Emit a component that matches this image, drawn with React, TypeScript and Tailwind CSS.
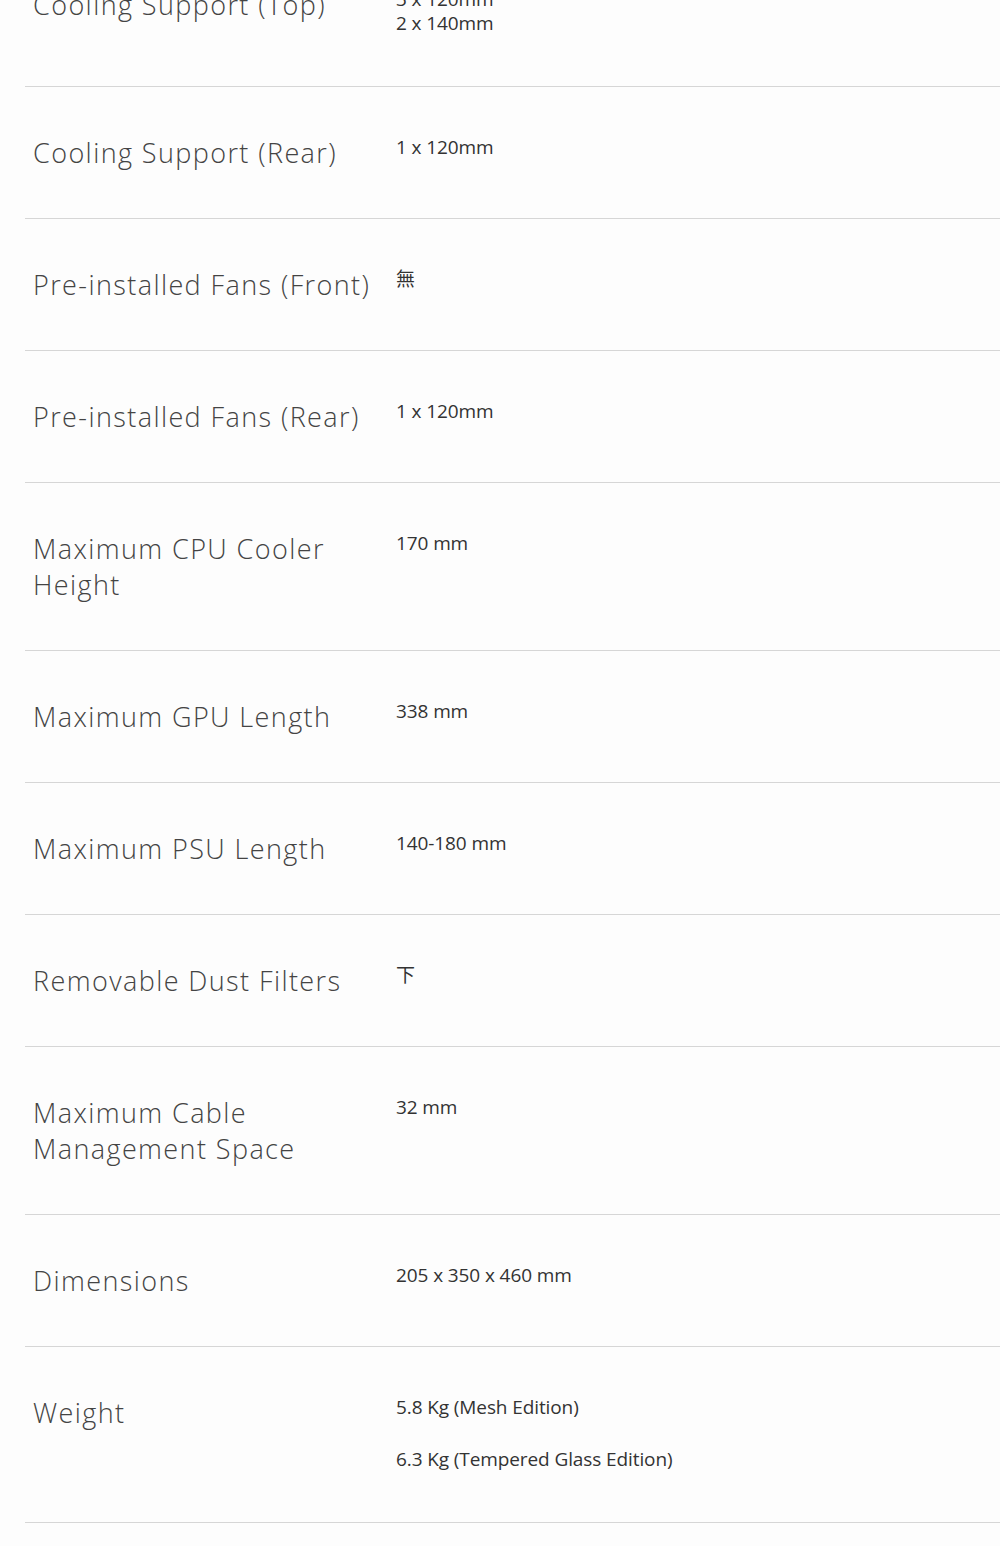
const specs: { label: string; values: string[]; multi?: boolean }[] = [
  { label: "Cooling Support (Top)", values: ["3 x 120mm", "2 x 140mm"], multi: true },
  { label: "Cooling Support (Rear)", values: ["1 x 120mm"] },
  { label: "Pre-installed Fans (Front)", values: ["無"] },
  { label: "Pre-installed Fans (Rear)", values: ["1 x 120mm"] },
  { label: "Maximum CPU Cooler Height", values: ["170 mm"] },
  { label: "Maximum GPU Length", values: ["338 mm"] },
  { label: "Maximum PSU Length", values: ["140-180 mm"] },
  { label: "Removable Dust Filters", values: ["下"] },
  { label: "Maximum Cable Management Space", values: ["32 mm"] },
  { label: "Dimensions", values: ["205 x 350 x 460 mm"] },
  { label: "Weight", values: ["5.8 Kg (Mesh Edition)", "6.3 Kg (Tempered Glass Edition)"] },
];

export default function App() {
  return (
    <div className="w-[1000px] min-h-[1546px] bg-[#fdfdfd] overflow-hidden">
      <div className="ml-[25px] -mt-[61px]">
        {specs.map((spec, i) => (
          <div
            key={i}
            className={`flex border-b border-[#d6d6d6] pt-12 ${i === 0 ? "pb-[51px]" : "pb-[47px]"}`}
          >
            <div className="w-[371px] shrink-0 pl-2 pr-3 text-[27px] leading-[36px] font-light text-[#444444] font-['Open_Sans','Noto_Sans_CJK_TC',sans-serif] tracking-[1.4px]">
              {spec.label}
            </div>
            <div className="text-[19px] leading-[24px] text-[#333333] font-['Open_Sans','Noto_Sans_CJK_TC',sans-serif] tracking-[-0.1px]">
              {spec.multi ? (
                spec.values.map((v, j) => <div key={j}>{v}</div>)
              ) : spec.values.length > 1 ? (
                spec.values.map((v, j) => (
                  <p key={j} className={j < spec.values.length - 1 ? "mb-[28px]" : "mb-[4px]"}>
                    {v}
                  </p>
                ))
              ) : (
                <p>{spec.values[0]}</p>
              )}
            </div>
          </div>
        ))}
      </div>
    </div>
  );
}
